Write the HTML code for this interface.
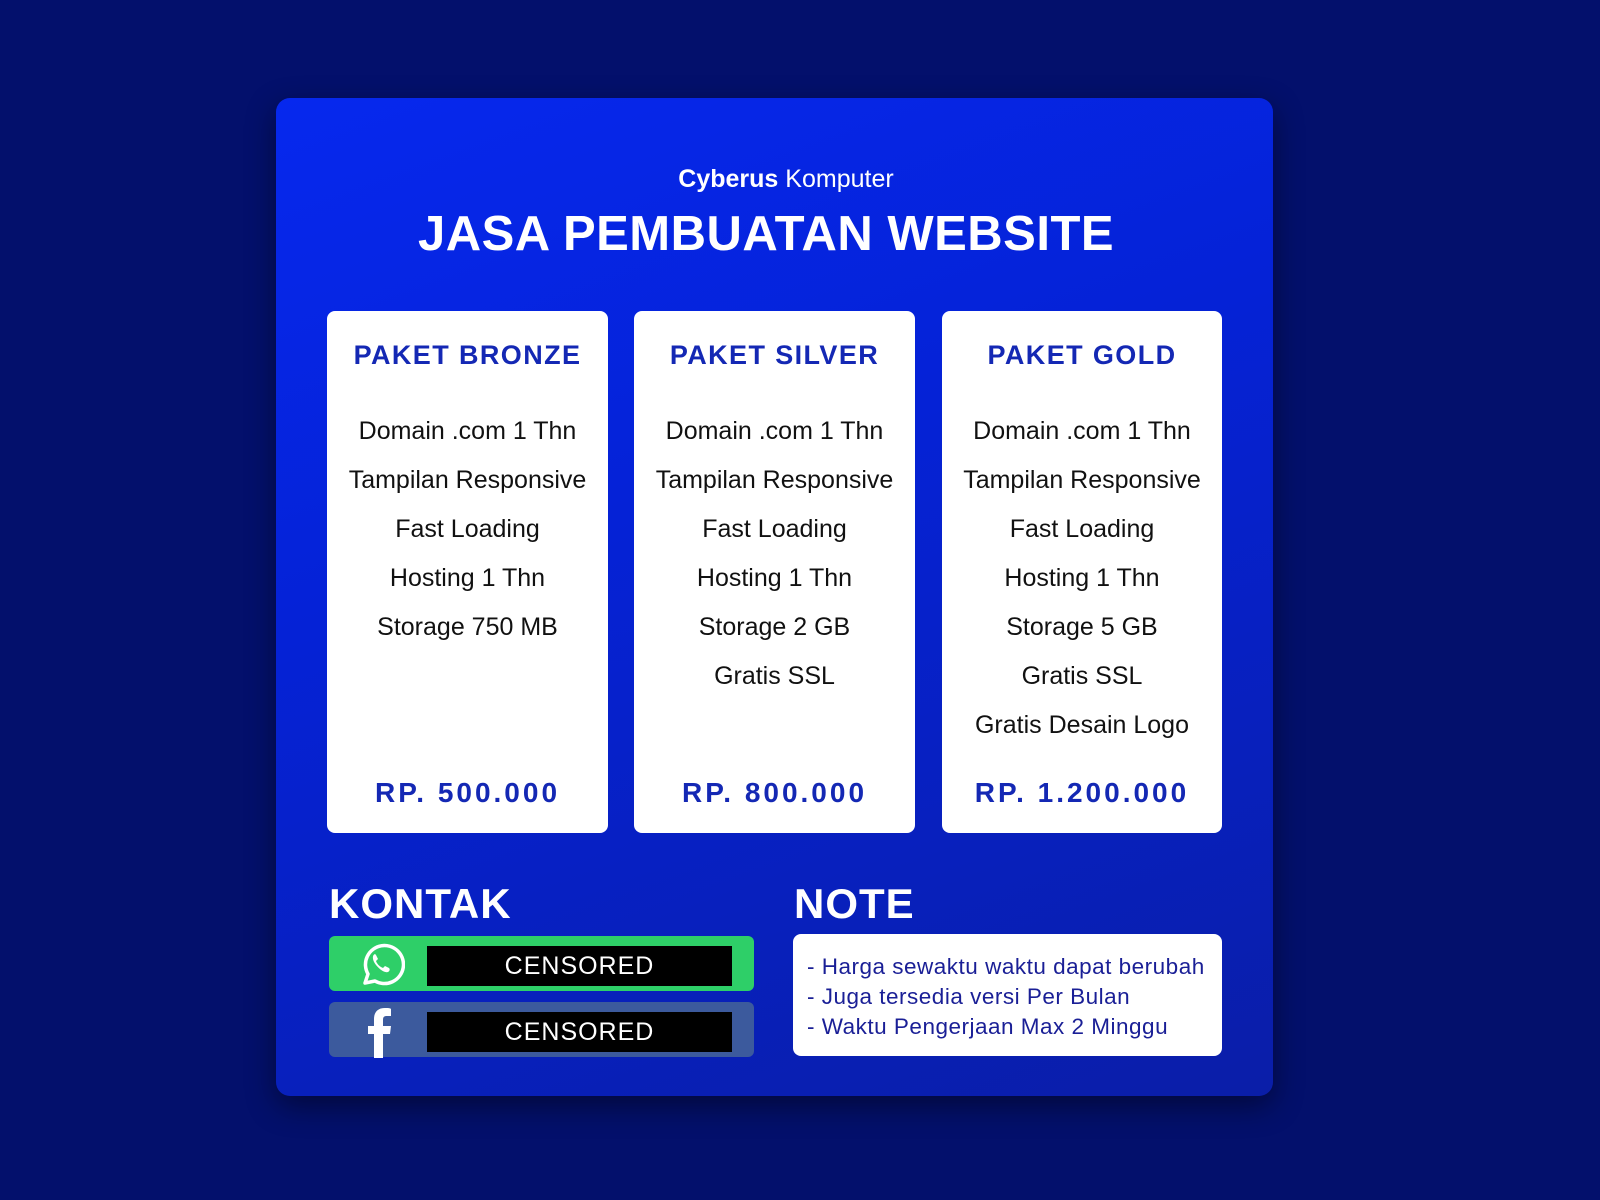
<!DOCTYPE html>
<html><head><meta charset="utf-8"><style>
*{margin:0;padding:0;box-sizing:border-box}
body{width:1600px;height:1200px;background:#03106c;font-family:"Liberation Sans",sans-serif;position:relative;overflow:hidden}
.main{position:absolute;left:276px;top:98px;width:997px;height:998px;border-radius:14px;background:linear-gradient(160deg,#0628ee 0%,#0522d6 40%,#0a1ea8 100%);box-shadow:0 10px 30px rgba(0,0,0,.45)}
.abs{position:absolute}
.brand{left:586px;width:400px;top:165px;text-align:center;color:#fff;font-size:25px}
.title{left:366px;width:800px;top:206px;text-align:center;color:#fff;font-size:49px;font-weight:bold;letter-spacing:0.5px}
.card{position:absolute;top:311px;height:522px;background:#fff;border-radius:8px;text-align:center}
.card h2{position:absolute;top:29px;width:100%;font-size:27px;color:#1428b4;letter-spacing:1.4px}
.card ul{list-style:none;position:absolute;top:106px;width:100%;font-size:25px;color:#111}
.card li{height:49px}
.card .p{position:absolute;top:466px;width:100%;font-size:28px;font-weight:bold;color:#1428b4;letter-spacing:3px}
.h{font-size:42px;font-weight:bold;color:#fff;letter-spacing:1px;top:880px}
.bar{position:absolute;left:329px;width:425px;height:55px;border-radius:6px}
.blk{position:absolute;left:98px;top:10px;width:305px;height:40px;background:#000;color:#fff;font-size:25px;text-align:center;line-height:40px;letter-spacing:1px}
.note{left:793px;top:934px;width:429px;height:122px;background:#fff;border-radius:8px;padding:18px 14px;color:#1a1f96;font-size:22.5px;line-height:30px;letter-spacing:.5px}
</style></head><body>
<div class="main"></div>
<div class="abs brand"><b>Cyberus</b> Komputer</div>
<div class="abs title">JASA PEMBUATAN WEBSITE</div>
<div class="card" style="left:327px;width:281px"><h2>PAKET BRONZE</h2><ul><li>Domain .com 1 Thn</li><li>Tampilan Responsive</li><li>Fast Loading</li><li>Hosting 1 Thn</li><li>Storage 750 MB</li></ul><div class="p">RP. 500.000</div></div>
<div class="card" style="left:634px;width:281px"><h2>PAKET SILVER</h2><ul><li>Domain .com 1 Thn</li><li>Tampilan Responsive</li><li>Fast Loading</li><li>Hosting 1 Thn</li><li>Storage 2 GB</li><li>Gratis SSL</li></ul><div class="p">RP. 800.000</div></div>
<div class="card" style="left:942px;width:280px"><h2>PAKET GOLD</h2><ul><li>Domain .com 1 Thn</li><li>Tampilan Responsive</li><li>Fast Loading</li><li>Hosting 1 Thn</li><li>Storage 5 GB</li><li>Gratis SSL</li><li>Gratis Desain Logo</li></ul><div class="p">RP. 1.200.000</div></div>
<div class="abs h" style="left:329px">KONTAK</div>
<div class="abs h" style="left:794px">NOTE</div>
<div class="bar" style="top:936px;background:#2ecf68">
<svg class="abs" style="left:30px;top:5px" width="46" height="46" viewBox="0 0 46 46"><path d="M6 42l3-9A19 19 0 1 1 16 40z" fill="none" stroke="#fff" stroke-width="3.5" stroke-linejoin="round"/><path d="M16 13c-3 1-3 6 1 11s9 8 12 7c2-1 2-3 1-4l-4-2-2 2c-3-1-6-4-7-7l2-2-2-4c-1-1-1-1-1-1z" fill="#fff"/></svg>
<div class="blk">CENSORED</div></div>
<div class="bar" style="top:1002px;background:#3c5a9d">
<svg class="abs" style="left:36px;top:4px" width="32" height="52" viewBox="0 0 32 52"><path d="M9 52V28H3v-8h6v-7c0-7 4-11 11-11 3 0 5 0 6 1v7h-4c-3 0-4 1-4 4v6h8l-1 8h-7v24z" fill="#fff"/></svg>
<div class="blk">CENSORED</div></div>
<div class="abs note">- Harga sewaktu waktu dapat berubah<br>- Juga tersedia versi Per Bulan<br>- Waktu Pengerjaan Max 2 Minggu</div>
</body></html>
